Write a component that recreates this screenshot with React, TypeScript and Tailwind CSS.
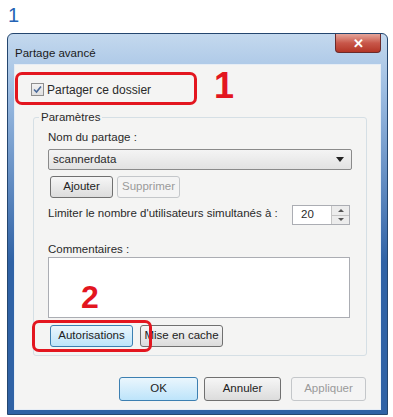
const font = { fontFamily: '"Liberation Sans", Arial, sans-serif' };

type BtnKind = "normal" | "focus" | "disabled";

const btnClass: Record<BtnKind, string> = {
  normal:
    "border-[#707070] bg-gradient-to-b from-[#f6f6f6] to-[#dcdcdc] text-[#222]",
  focus:
    "border-[#3c7fb1] bg-gradient-to-b from-[#eaf6fd] to-[#bde4fa] text-[#222]",
  disabled: "border-[#c4c7ca] bg-[#f4f4f4] text-[#9a9a9a]",
};

function Btn({
  label,
  kind = "normal",
  className = "",
}: {
  label: string;
  kind?: BtnKind;
  className?: string;
}) {
  return (
    <div
      className={`flex items-center justify-center rounded-[3px] border text-[11.5px] leading-none ${btnClass[kind]} ${className}`}
    >
      {label}
    </div>
  );
}

function RedBox({ className }: { className: string }) {
  return (
    <div
      className={`absolute rounded-[7px] border-[3px] border-[#e3161f] ${className}`}
    />
  );
}

export default function App() {
  return (
    <div
      className="relative h-[417px] w-[393px] overflow-hidden bg-white"
      style={font}
    >
      <div className="ml-[8px] pt-[4px] text-[20px] leading-[22px] text-[#2463b5]">
        1
      </div>

      {/* window */}
      <div className="ml-[7px] mt-[7px] flex h-[382px] w-[381px] flex-col rounded-t-[6px] border border-[#24466f] bg-gradient-to-b from-[#c4d9ee] via-[#9dbde2] via-15% to-[#2f62a5] to-60% px-[6px] pb-[4px]">
        {/* title bar */}
        <div className="flex h-[30px] items-start">
          <div className="mt-[11px] ml-[1px] text-[11.5px] text-[#1b1b1b]">
            Partage avancé
          </div>
          <div className="ml-auto flex h-[19px] w-[46px] items-center justify-center rounded-b-[4px] border border-t-0 border-[#6b2a2a] bg-gradient-to-b from-[#e4a59b] via-[#c8574a] to-[#b33526] text-[13px] font-bold leading-none text-white">
            ✕
          </div>
        </div>

        {/* client area */}
        <div className="relative flex flex-1 flex-col border border-[#e6edf5] bg-[#f4f4f3] text-[11.5px] text-[#2a2a2a]">
          <div className="ml-[16px] mt-[18px] flex h-[13px] items-center gap-[3px]">
            <div className="flex h-[13px] w-[13px] items-center justify-center border border-[#8f8f8f] bg-gradient-to-b from-[#f2f2f2] to-[#e0e0e0]">
              <svg width="9" height="9" viewBox="0 0 9 9">
                <path
                  d="M1 4.5 L3.5 7 L8 1.5"
                  fill="none"
                  stroke="#4a6a9a"
                  strokeWidth="1.6"
                />
              </svg>
            </div>
            <span className="text-[12px] leading-none">Partager ce dossier</span>
          </div>

          {/* group box */}
          <div className="relative ml-[18px] mt-[21px] flex w-[334px] flex-col rounded-[3px] border border-[#d5dfe5] pb-[8px] pl-[14px]">
            <span className="absolute -top-[8px] left-[5px] bg-[#f4f4f3] px-[2px] leading-[14px]">
              Paramètres
            </span>
            <div className="mt-[12px] leading-[14px]">Nom du partage :</div>
            <div className="mt-[5px] flex h-[21px] w-[304px] items-center rounded-[2px] border border-[#8a8a8a] bg-gradient-to-b from-[#f4f4f4] to-[#e2e2e2] pl-[4px] pr-[7px]">
              <span>scannerdata</span>
              <svg className="ml-auto" width="8" height="5" viewBox="0 0 8 5">
                <path d="M0 0 H8 L4 5 Z" fill="#222" />
              </svg>
            </div>
            <div className="mt-[6px] ml-[2px] flex gap-[4px]">
              <Btn label="Ajouter" className="h-[22px] w-[63px]" />
              <Btn
                label="Supprimer"
                kind="disabled"
                className="h-[22px] w-[63px]"
              />
            </div>
            <div className="mt-[7px] flex w-[302px] items-center">
              <span className="-mt-[2px]">
                Limiter le nombre d'utilisateurs simultanés à :
              </span>
              <div className="ml-auto flex h-[20px] items-center border border-[#abadb3] bg-white">
                <div className="w-[38px] pl-[8px]">20</div>
                <div className="flex h-full w-[18px] flex-col border-l border-[#c5c5c5] bg-[#ececec]">
                  <div className="flex flex-1 items-center justify-center border-b border-[#c5c5c5]">
                    <svg width="6" height="3" viewBox="0 0 6 3">
                      <path d="M0 3 L3 0 L6 3 Z" fill="#555" />
                    </svg>
                  </div>
                  <div className="flex flex-1 items-center justify-center">
                    <svg width="6" height="3" viewBox="0 0 6 3">
                      <path d="M0 0 H6 L3 3 Z" fill="#555" />
                    </svg>
                  </div>
                </div>
              </div>
            </div>
            <div className="mt-[17px] leading-[14px]">Commentaires :</div>
            <div className="mt-[1px] h-[61px] w-[302px] border border-[#abadb3] bg-white" />
            <div className="mt-[7px] ml-[2px] flex gap-[7px]">
              <Btn
                label="Autorisations"
                kind="focus"
                className="h-[22px] w-[83px]"
              />
              <Btn label="Mise en cache" className="h-[22px] w-[83px]" />
            </div>
          </div>

          {/* dialog buttons */}
          <div className="mt-[21px] flex">
            <Btn label="OK" kind="focus" className="ml-[104px] h-[24px] w-[79px]" />
            <Btn label="Annuler" className="ml-[6px] h-[24px] w-[77px]" />
            <Btn
              label="Appliquer"
              kind="disabled"
              className="ml-[10px] h-[24px] w-[75px]"
            />
          </div>

          {/* annotations */}
          <RedBox className="left-[0px] top-[7px] h-[33px] w-[182px]" />
          <div className="absolute left-[199px] top-[1px] text-[36px] font-bold leading-[40px] text-[#e3161f]">
            1
          </div>
          <div className="absolute left-[66px] top-[214px] text-[32px] font-bold leading-[36px] text-[#e3161f]">
            2
          </div>
          <RedBox className="left-[17px] top-[255px] h-[32px] w-[120px]" />
        </div>
      </div>
    </div>
  );
}
